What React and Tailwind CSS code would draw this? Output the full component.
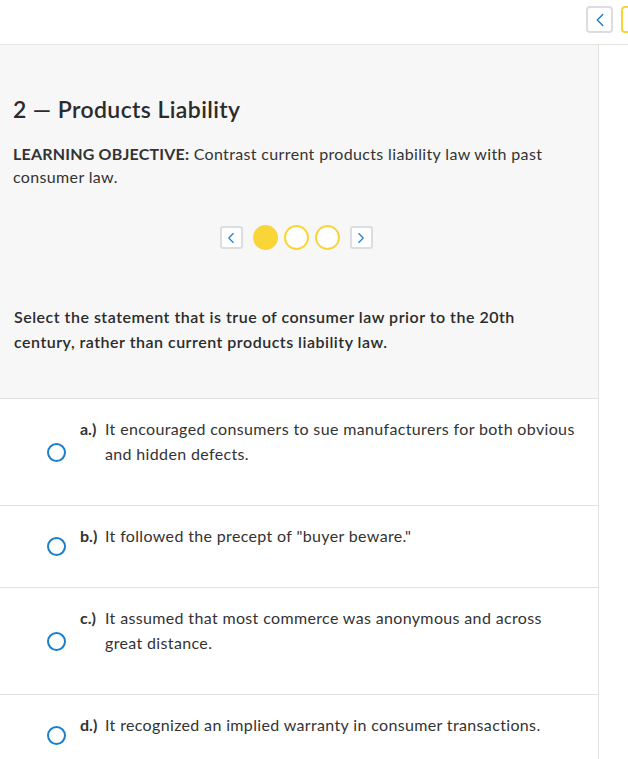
import { ChevronLeft, ChevronRight } from 'lucide-react'

const answers = [
  { id: 'a.)', text: 'It encouraged consumers to sue manufacturers for both obvious and hidden defects.' },
  { id: 'b.)', text: 'It followed the precept of "buyer beware."' },
  { id: 'c.)', text: 'It assumed that most commerce was anonymous and across great distance.' },
  { id: 'd.)', text: 'It recognized an implied warranty in consumer transactions.' },
]

function PagerButton({ dir }) {
  return (
    <button className="w-[23px] h-[23px] flex items-center justify-center bg-white border-2 border-[#dcdde2] rounded-[3px]">
      {dir === 'left' ? (
        <ChevronLeft size={18} strokeWidth={1.5} className="text-[#1b7fcc]" />
      ) : (
        <ChevronRight size={18} strokeWidth={1.5} className="text-[#1b7fcc]" />
      )}
    </button>
  )
}

function AnswerRow({ answer }) {
  return (
    <div className="flex items-center border-b border-[#e2e2e2] pl-[47px] bg-white">
      <div className="w-[19px] h-[19px] rounded-full border-2 border-[#1b7fcc] shrink-0" />
      <div className="flex self-start ml-[14px] pr-[18px] pt-[17px] pb-[39px] text-[16px] leading-[25px] tracking-[0.35px] text-[#333]">
        <span className="font-bold w-[25px] shrink-0 tracking-normal">{answer.id}</span>
        <span>{answer.text}</span>
      </div>
    </div>
  )
}

export default function App() {
  return (
    <div className="w-[628px] h-[759px] overflow-hidden bg-white font-['Lato','Open_Sans',sans-serif] text-[#333]">
      <div className="h-[45px] border-b border-[#e4e4e4] flex items-start justify-end gap-[8px] pt-[6px] pr-0">
        <button className="w-[27px] h-[27px] flex items-center justify-center bg-white border-2 border-[#dcdde2] rounded-[4px]">
          <ChevronLeft size={22} strokeWidth={1.5} className="text-[#1b7fcc]" />
        </button>
        <div className="w-[7px] h-[27px] border-2 border-r-0 border-[#f9d537] rounded-l-[4px]" />
      </div>
      <div className="flex">
        <div className="w-[599px] border-r border-[#e2e2e2] min-h-[714px]">
          <div className="bg-[#f7f7f7] h-[354px] border-b border-[#e2e2e2] px-[13px] pt-[49px]">
            <h2 className="text-[23px] leading-[30px] font-semibold tracking-[0.4px] text-[#2b2b2b]">2 — Products Liability</h2>
            <p className="mt-[18px] text-[16px] leading-[23px] tracking-[0.35px] pr-[30px]">
              <span className="font-bold tracking-[0.2px]">LEARNING OBJECTIVE:</span> Contrast current products liability law with past consumer law.
            </p>
            <div className="mt-[37px] flex items-center justify-center gap-[6px] pr-[6px]">
              <PagerButton dir="left" />
              <div className="w-[25px] h-[25px] rounded-full bg-[#f9d537] ml-[4px]" />
              <div className="w-[25px] h-[25px] rounded-full bg-white border-[2.5px] border-[#f9d537]" />
              <div className="w-[25px] h-[25px] rounded-full bg-white border-[2.5px] border-[#f9d537] mr-[4px]" />
              <PagerButton dir="right" />
            </div>
            <p className="mt-[54px] pl-[1px] pr-[50px] text-[16px] leading-[25px] font-semibold tracking-[0.5px] text-[#2b2b2b]">
              Select the statement that is true of consumer law prior to the 20th century, rather than current products liability law.
            </p>
          </div>
          {answers.map((a) => (
            <AnswerRow key={a.id} answer={a} />
          ))}
        </div>
        <div className="flex-1" />
      </div>
    </div>
  )
}
